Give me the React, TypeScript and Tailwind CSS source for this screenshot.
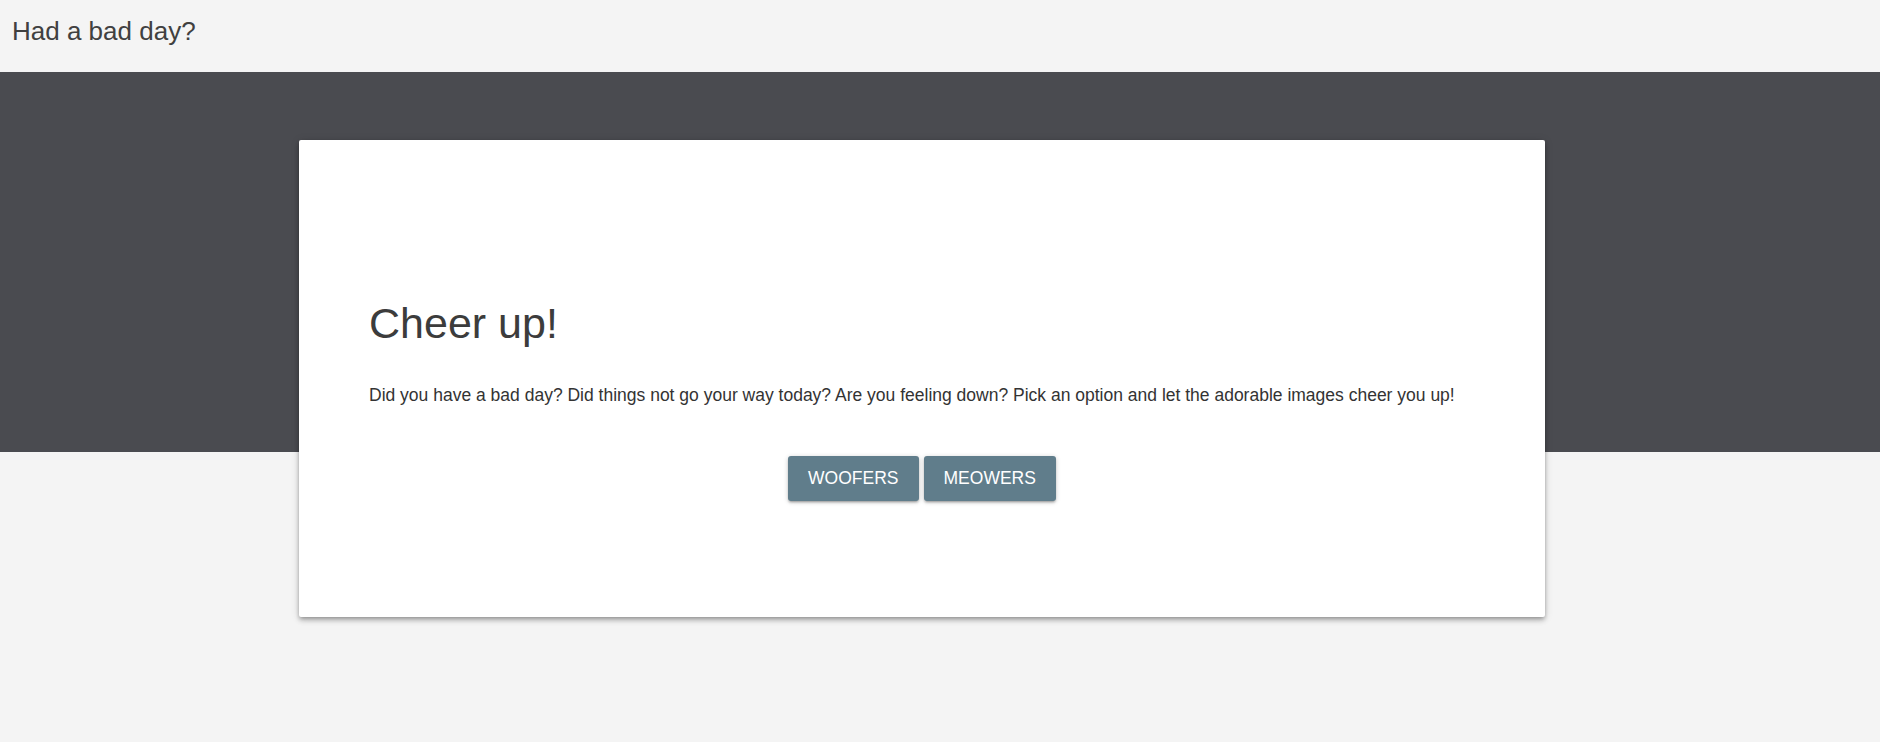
import React from 'react';

const App: React.FC = () => {
  const options = ['WOOFERS', 'MEOWERS'];

  return (
    <div className="min-h-screen bg-[#f4f4f4] font-['Liberation_Sans',Arial,sans-serif] text-[#404040]">
      {/* Top bar */}
      <header className="h-[72px] pt-[17px] pl-3">
        <h1 className="text-[26px] leading-[1.15]">Had a bad day?</h1>
      </header>

      {/* Dark band behind the card */}
      <main className="bg-[linear-gradient(#4a4b50_380px,#f4f4f4_380px)] pt-[68px] pb-[125px]">
        <section className="ml-[299px] w-[1246px] h-[477px] rounded-[2px] bg-white pt-[160px] pl-[70px] pr-[70px] shadow-[0_4px_5px_0_rgba(0,0,0,0.14),0_1px_10px_0_rgba(0,0,0,0.12),0_2px_4px_-1px_rgba(0,0,0,0.3)]">
          <h2 className="text-[43px] leading-[1.1] text-[#3c3c3c]">Cheer up!</h2>
          <p className="mt-[35px] text-[17.5px] leading-[1.5] text-[#333]">
            Did you have a bad day? Did things not go your way today? Are you feeling down? Pick an option and let the adorable images cheer you up!
          </p>
          <div className="mt-[47px] -ml-[70px] -mr-[70px] flex justify-center gap-[5px]">
            {options.map((label) => (
              <button
                key={label}
                className="h-[45px] rounded-[3px] bg-[#607d8b] px-5 text-[17.5px] text-white shadow-[0_2px_2px_0_rgba(0,0,0,0.14),0_3px_1px_-2px_rgba(0,0,0,0.12),0_1px_5px_0_rgba(0,0,0,0.2)]"
              >
                {label}
              </button>
            ))}
          </div>
        </section>
      </main>
    </div>
  );
};

export default App;
